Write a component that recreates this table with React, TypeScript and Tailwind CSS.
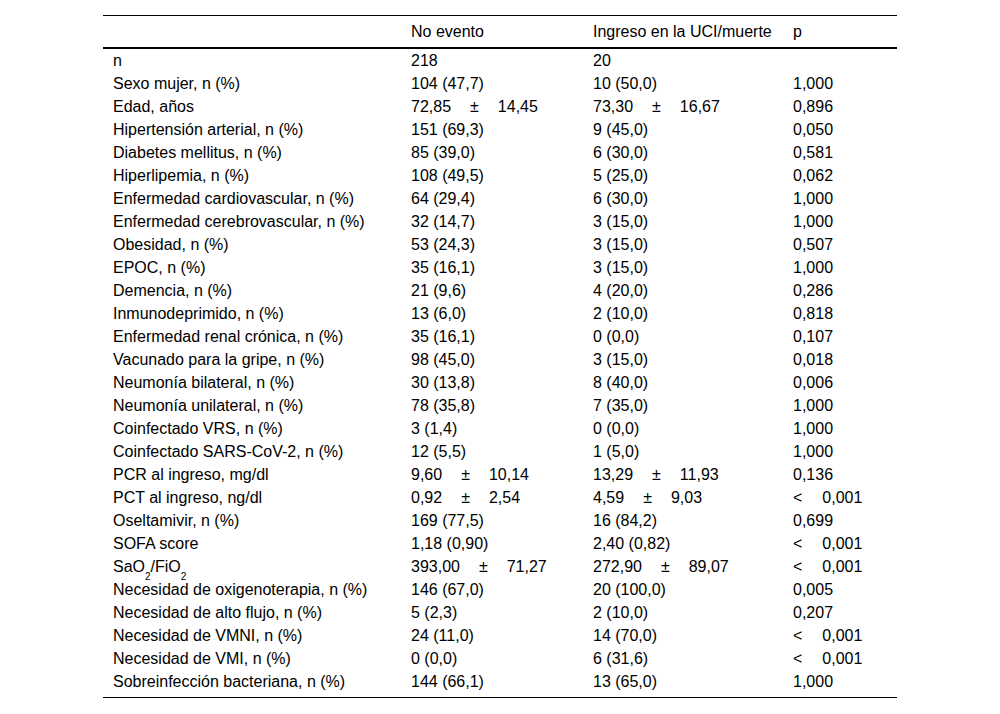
import * as React from "react";

type Cell = string | { a: string; b: string } | { lt: string };

const rows: [React.ReactNode, Cell, Cell, Cell][] = [
  ["n", "218", "20", ""],
  ["Sexo mujer, n (%)", "104 (47,7)", "10 (50,0)", "1,000"],
  ["Edad, años", { a: "72,85", b: "14,45" }, { a: "73,30", b: "16,67" }, "0,896"],
  ["Hipertensión arterial, n (%)", "151 (69,3)", "9 (45,0)", "0,050"],
  ["Diabetes mellitus, n (%)", "85 (39,0)", "6 (30,0)", "0,581"],
  ["Hiperlipemia, n (%)", "108 (49,5)", "5 (25,0)", "0,062"],
  ["Enfermedad cardiovascular, n (%)", "64 (29,4)", "6 (30,0)", "1,000"],
  ["Enfermedad cerebrovascular, n (%)", "32 (14,7)", "3 (15,0)", "1,000"],
  ["Obesidad, n (%)", "53 (24,3)", "3 (15,0)", "0,507"],
  ["EPOC, n (%)", "35 (16,1)", "3 (15,0)", "1,000"],
  ["Demencia, n (%)", "21 (9,6)", "4 (20,0)", "0,286"],
  ["Inmunodeprimido, n (%)", "13 (6,0)", "2 (10,0)", "0,818"],
  ["Enfermedad renal crónica, n (%)", "35 (16,1)", "0 (0,0)", "0,107"],
  ["Vacunado para la gripe, n (%)", "98 (45,0)", "3 (15,0)", "0,018"],
  ["Neumonía bilateral, n (%)", "30 (13,8)", "8 (40,0)", "0,006"],
  ["Neumonía unilateral, n (%)", "78 (35,8)", "7 (35,0)", "1,000"],
  ["Coinfectado VRS, n (%)", "3 (1,4)", "0 (0,0)", "1,000"],
  ["Coinfectado SARS-CoV-2, n (%)", "12 (5,5)", "1 (5,0)", "1,000"],
  ["PCR al ingreso, mg/dl", { a: "9,60", b: "10,14" }, { a: "13,29", b: "11,93" }, "0,136"],
  ["PCT al ingreso, ng/dl", { a: "0,92", b: "2,54" }, { a: "4,59", b: "9,03" }, { lt: "0,001" }],
  ["Oseltamivir, n (%)", "169 (77,5)", "16 (84,2)", "0,699"],
  ["SOFA score", "1,18 (0,90)", "2,40 (0,82)", { lt: "0,001" }],
  [
    <>
      SaO<sub className="text-[10px] align-[-5px] leading-none">2</sub>/FiO
      <sub className="text-[10px] align-[-5px] leading-none">2</sub>
    </>,
    { a: "393,00", b: "71,27" },
    { a: "272,90", b: "89,07" },
    { lt: "0,001" },
  ],
  ["Necesidad de oxigenoterapia, n (%)", "146 (67,0)", "20 (100,0)", "0,005"],
  ["Necesidad de alto flujo, n (%)", "5 (2,3)", "2 (10,0)", "0,207"],
  ["Necesidad de VMNI, n (%)", "24 (11,0)", "14 (70,0)", { lt: "0,001" }],
  ["Necesidad de VMI, n (%)", "0 (0,0)", "6 (31,6)", { lt: "0,001" }],
  ["Sobreinfección bacteriana, n (%)", "144 (66,1)", "13 (65,0)", "1,000"],
];

function Value({ v }: { v: Cell }) {
  if (typeof v === "string") return <span>{v}</span>;
  if ("lt" in v)
    return (
      <span>
        &lt;<span className="ml-[20px]">{v.lt}</span>
      </span>
    );
  return (
    <span>
      {v.a}
      <span className="ml-[19px]">±</span>
      <span className="ml-[19px]">{v.b}</span>
    </span>
  );
}

export default function App() {
  return (
    <div
      className="w-[1000px] h-[714px] bg-white text-black text-[16px] pt-[15px]"
      style={{ fontFamily: '"Liberation Sans", Arial, sans-serif' }}
    >
      <div className="ml-[103px] w-[794px] border-t border-black border-b">
        <div className="grid grid-cols-[298px_182px_200px_1fr] pl-[10px] h-[33px] items-center border-b-2 border-black">
          <span></span>
          <span>No evento</span>
          <span>Ingreso en la UCI/muerte</span>
          <span>p</span>
        </div>
        <div className="pb-[4px]">
          {rows.map((r, i) => (
            <div
              key={i}
              className="grid grid-cols-[298px_182px_200px_1fr] pl-[10px] h-[23px] leading-[23px] whitespace-nowrap"
            >
              <span>{r[0]}</span>
              <Value v={r[1]} />
              <Value v={r[2]} />
              <Value v={r[3]} />
            </div>
          ))}
        </div>
      </div>
    </div>
  );
}
